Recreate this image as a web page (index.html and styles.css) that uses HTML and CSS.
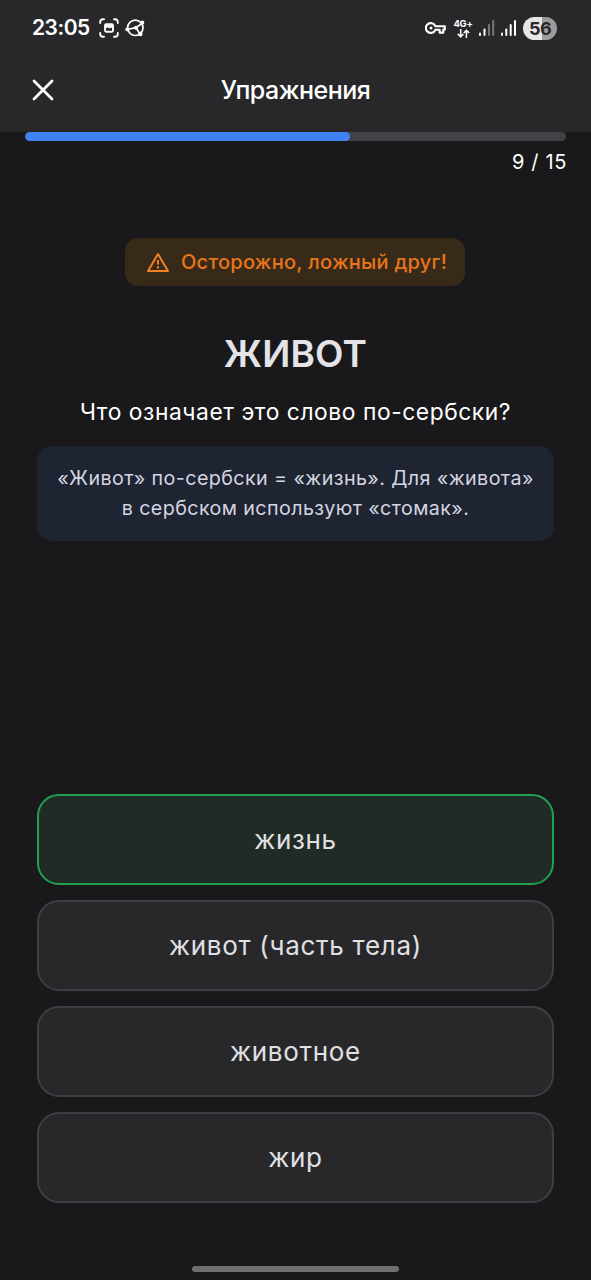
FILE: index.html
```html
<!DOCTYPE html>
<html lang="ru">
<head>
<meta charset="utf-8">
<title>Упражнения</title>
<link rel="stylesheet" href="styles.css">
</head>
<body>
<div class="screen">
  <div class="top">
    <div class="status">
      <span class="time">23:05</span>
      <svg class="ic-shot" width="20" height="20" viewBox="0 0 20 20" fill="none" stroke="#fff" stroke-width="1.9" stroke-linecap="round">
        <path d="M1.2 5V4Q1.2 1.2 4 1.2H5M15 1.2h1Q18.8 1.2 18.8 4v1M18.8 15v1q0 2.8-2.8 2.8h-1M5 18.8H4Q1.2 18.8 1.2 16v-1"/>
        <rect x="6" y="6.2" width="8" height="7.6" rx="1.2"/>
        <path d="M6.5 11l2-1.8 1.8 1.3 1.7-1 1.5 1v-4h-7z" fill="#fff" stroke="none"/>
      </svg>
      <svg class="ic-globe" width="20" height="20" viewBox="0 0 20 20" fill="none" stroke="#fff" stroke-width="1.7">
        <circle cx="10.3" cy="9.8" r="7.7"/>
        <path d="M1.8 11.5L11 9.7L17.5 5M11 9.7L15 16"/>
        <g fill="#fff" stroke="none"><circle cx="2.2" cy="11.4" r="1.9"/><circle cx="17.3" cy="4.6" r="2"/><circle cx="11" cy="9.8" r="2"/><circle cx="15.4" cy="16" r="2.2"/></g>
      </svg>
      <span class="grow"></span>
      <svg class="ic-key" width="21" height="14" viewBox="0 0 21 14" fill="none" stroke="#fff" stroke-width="2.1" stroke-linejoin="round">
        <path d="M10.3 5.2H19.8V8.6H18.3V11.6H14.6V8.8H10.3A4.9 4.9 0 1 1 10.3 5.2Z"/>
        <circle cx="6" cy="7" r="1.5" fill="#fff" stroke="none"/>
      </svg>
      <span class="net"><span class="net-label">4G+</span>
        <svg width="13" height="9" viewBox="0 0 13 9" fill="none" stroke="#fff" stroke-width="1.5"><path d="M3.7 0V7.6M.8 4.9L3.7 7.8L6.4 4.9M9.4 9V1.2M6.7 4L9.4 1.2L12.2 4"/></svg>
      </span>
      <svg class="ic-sig1" width="16" height="16" viewBox="0 0 16 16"><g fill="#fff"><rect x="0" y="12.5" width="2" height="3.5" rx="1"/><rect x="4.5" y="8.5" width="2" height="7.5" rx="1"/></g><g fill="#77777a"><rect x="9" y="4" width="2" height="12" rx="1"/><rect x="13.2" y="0" width="2" height="16" rx="1"/></g></svg>
      <svg class="ic-sig2" width="16" height="16" viewBox="0 0 16 16" fill="#fff"><rect x="0" y="12.5" width="2" height="3.5" rx="1"/><rect x="4.3" y="8.5" width="2" height="7.5" rx="1"/><rect x="8.7" y="4" width="2" height="12" rx="1"/><rect x="13" y="0" width="2" height="16" rx="1"/></svg>
      <span class="battery">56</span>
    </div>
    <div class="appbar">
      <svg class="close" width="22" height="22" viewBox="0 0 22 22" fill="none" stroke="#fff" stroke-width="2.8" stroke-linecap="round"><path d="M2 2L20 20M20 2L2 20"/></svg>
      <h1 class="title">Упражнения</h1>
    </div>
  </div>
  <div class="progress"><div class="progress-fill" style="width:60%"></div></div>
  <div class="counter">9 / 15</div>
  <div class="warning">
    <svg width="24" height="21" viewBox="0 0 24 21" fill="none" stroke="#f08020" stroke-width="2" stroke-linejoin="round"><path d="M12 2L22 19H2Z"/><path d="M12 8v4.5M12 14.3v2.2"/></svg>
    <span class="warning-text">Осторожно, ложный друг!</span>
  </div>
  <h2 class="word">ЖИВОТ</h2>
  <p class="question">Что означает это слово по-сербски?</p>
  <div class="hint">«Живот» по-сербски = «жизнь». Для «живота»<br>в сербском используют «стомак».</div>
  <div class="options">
    <div class="option correct">жизнь</div>
    <div class="option">живот (часть тела)</div>
    <div class="option">животное</div>
    <div class="option">жир</div>
  </div>
  <div class="home-bar"></div>
</div>
</body>
</html>
```

FILE: styles.css
```css
* { box-sizing: border-box; margin: 0; padding: 0; }
body { background: #19191b; font-family: Inter, "Noto Sans", sans-serif; color: #fff; }
svg { display: block; flex: none; }
.screen { width: 591px; height: 1280px; display: flex; flex-direction: column; overflow: hidden; background: #19191b; }
.top { height: 132px; flex: none; background: #28282b; }
.status { height: 56px; display: flex; align-items: center; padding: 0 34px 0 32px; }
.time { width: 58px; font-size: 21px; font-weight: 600; line-height: 26px; letter-spacing: -.5px; white-space: nowrap; }
.ic-shot { margin-left: 9px; }
.ic-globe { margin-left: 6px; }
.grow { flex: 1; }
.net { width: 20px; margin-left: 7px; display: flex; flex-direction: column; align-items: center; }
.net-label { font-size: 9.5px; font-weight: 700; line-height: 10px; letter-spacing: -.3px; }
.ic-sig1 { margin-left: 6px; }
.ic-sig2 { margin-left: 6px; }
.battery { width: 34px; height: 23px; margin-left: 6px; border-radius: 12px; background: linear-gradient(90deg, #e6e6e7 57%, #9c9c9d 57%); color: #28282b; font-size: 18px; font-weight: 700; line-height: 23px; letter-spacing: -.6px; text-align: center; }
.appbar { height: 68px; padding: 0 32px; display: grid; grid-template-columns: 22px 1fr 22px; align-items: center; }
.close { margin-top: -1px; }
.title { font-size: 25px; font-weight: 500; line-height: 30px; text-align: center; letter-spacing: -0.5px; }
.progress { flex: none; height: 9px; margin: 0 25px; border-radius: 5px; background: #424246; overflow: hidden; }
.progress-fill { height: 100%; border-radius: 5px; background: #3f83f2; }
.counter { margin: 8px 24px 0; height: 26px; font-size: 20px; line-height: 26px; letter-spacing: .65px; text-align: right; }
.warning { align-self: center; flex: none; width: 340px; height: 48px; margin: 63px 1px 0 0; padding-left: 21px; display: flex; align-items: center; gap: 11px; border-radius: 13px; background: #382a19; color: #e87519; }
.warning-text { font-size: 20px; font-weight: 500; letter-spacing: .27px; line-height: 24px; white-space: nowrap; }
.word { height: 56px; margin-top: 39px; font-size: 37px; font-weight: 600; line-height: 57px; letter-spacing: .2px; text-align: center; color: #e4e4e8; }
.question { height: 30px; margin-top: 15px; font-size: 22.8px; line-height: 31px; letter-spacing: .56px; text-align: center; white-space: nowrap; }
.hint { flex: none; height: 95px; margin: 20px 37px 0; padding-top: 18px; border-radius: 15px; background: #1e2431; color: #d4d5e0; font-size: 19.7px; line-height: 29.5px; letter-spacing: .41px; text-align: center; white-space: nowrap; }
.options { flex: none; margin: 253px 37px 0; display: flex; flex-direction: column; gap: 15px; }
.option { height: 91px; border: 2px solid #3e3e43; border-radius: 22px; background: #28282b; color: #e0e0e4; font-size: 26px; line-height: 87px; letter-spacing: .7px; text-align: center; }
.option.correct { border-color: #22a052; background: #202b26; }
.home-bar { flex: none; align-self: center; width: 207px; height: 6px; margin-top: 63px; border-radius: 3px; background: #6e6e70; }
```
